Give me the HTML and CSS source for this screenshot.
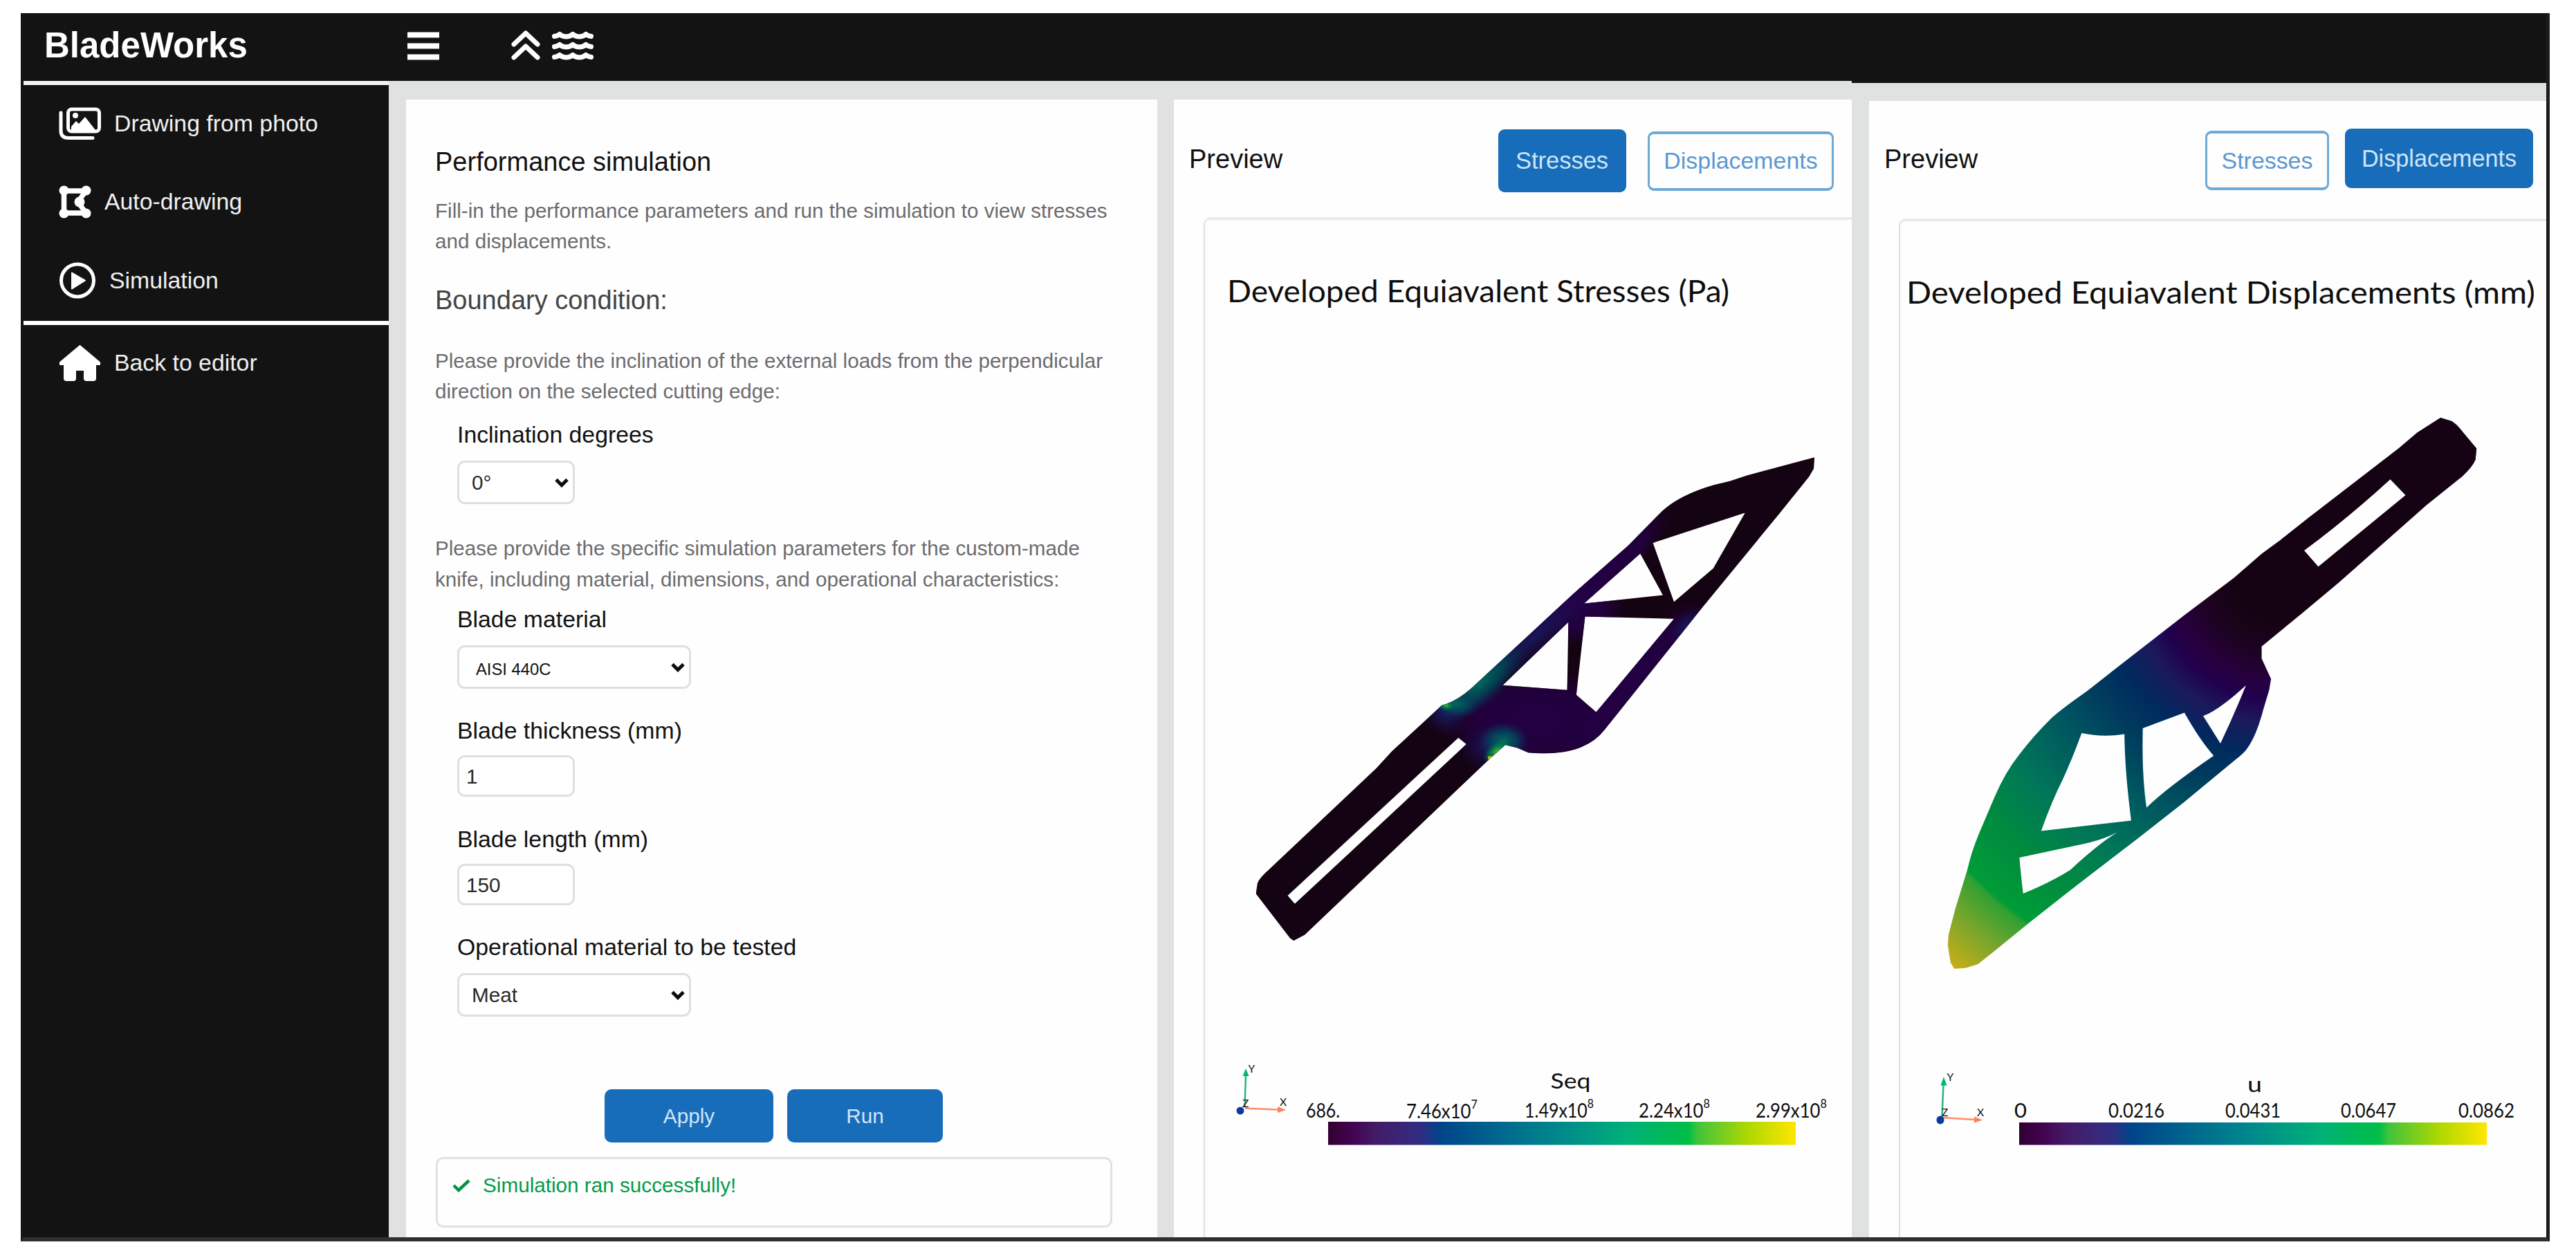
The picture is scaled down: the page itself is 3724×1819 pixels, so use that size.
FILE: index.html
```html
<!DOCTYPE html>
<html lang="en-US">
<head>
  <meta charset="UTF-8" />
  <meta name="viewport" content="width=device-width, initial-scale=1" />
  <title>BladeWorks - Simulation</title>
  <link rel="stylesheet" href="styles.css">
</head>
<body>
  <div class="app">
    <header class="topbar">
      <div class="brand">BladeWorks</div>
      <svg class="icon-menu" width="48" height="41" viewBox="0 0 48 41">
        <path d="M1 4.500H47M1 20.500H47M1 36.500H47" stroke="#fff" stroke-width="8" />
      </svg>
      <svg class="icon-up" width="42" height="44" viewBox="0 0 42 44" fill="none" stroke="#fff" stroke-width="7" stroke-linecap="round" stroke-linejoin="round">
        <path d="M4 21L21 5L38 21M4 40L21 24L38 40" />
      </svg>
      <svg class="icon-waves" width="60" height="42" viewBox="0 0 60 42" fill="none" stroke="#fff" stroke-width="7" stroke-linecap="round" stroke-linejoin="round">
        <path id="wave" d="M3.500 7.500Q8 7 11 4.500Q15 8 20.500 8Q26 8 30 4.500Q34 8 39.500 8Q45 8 49 4.500Q52 7 56.500 7.500" />
        <use href="#wave" y="15" />
        <use href="#wave" y="30" />
      </svg>
    </header>

    <div class="body">
      <nav class="sidebar">
        <a class="nav-item">
          <svg width="61" height="48" viewBox="0 0 61 48" fill="none" stroke="#fff">
            <rect x="13.500" y="3" width="45" height="32" rx="5" stroke-width="5" />
            <path d="M3 8V34Q3 44.500 14 44.500H49" stroke-width="5" stroke-linecap="round" />
            <circle cx="24" cy="12" r="4" fill="#fff" stroke="none" />
            <path d="M18 33V28L25 20L29 24L38 14L53 33Z" fill="#fff" stroke="none" />
          </svg>
          <span>Drawing from photo</span>
        </a>
        <a class="nav-item">
          <svg width="47" height="48" viewBox="0 0 47 48" fill="#fff" stroke="#fff">
            <path d="M7.500 8H39L28 24L39 40H7.500Z" fill="none" stroke-width="7.500" />
            <circle cx="7.500" cy="7.500" r="7" stroke="none" />
            <circle cx="39.500" cy="7.500" r="7" stroke="none" />
            <circle cx="30" cy="24" r="7.500" stroke="none" />
            <circle cx="39.500" cy="40.500" r="7" stroke="none" />
            <circle cx="7.500" cy="40.500" r="7" stroke="none" />
          </svg>
          <span>Auto-drawing</span>
        </a>
        <a class="nav-item">
          <svg width="54" height="53" viewBox="0 0 54 53">
            <circle cx="27" cy="26.500" r="23.500" fill="none" stroke="#fff" stroke-width="5" />
            <path d="M19 15.500L38 26.500L19 38.500Z" fill="#fff" stroke="#fff" stroke-width="2" stroke-linejoin="round" />
          </svg>
          <span>Simulation</span>
        </a>
        <div class="divider"></div>
        <a class="nav-item">
          <svg width="61" height="54" viewBox="0 0 61 54">
            <path d="M30.500 2L59 26V29H53V49Q53 52 50 52H40Q37 52 37 49V37H24V49Q24 52 21 52H11Q8 52 8 49V29H2V26Z" fill="#fff" stroke="#fff" stroke-width="2" stroke-linejoin="round" />
          </svg>
          <span>Back to editor</span>
        </a>
      </nav>

      <main class="workspace">
        <section class="panel form-panel">
          <h2>Performance simulation</h2>
          <p class="intro">Fill-in the performance parameters and run the simulation to view stresses<br>and displacements.</p>
          <h3>Boundary condition:</h3>
          <p class="note">Please provide the inclination of the external loads from the perpendicular<br>direction on the selected cutting edge:</p>

          <div class="field field-degrees">
            <label for="degrees">Inclination degrees</label>
            <div class="select short">
              <select id="degrees"><option>0°</option></select>
              <svg class="arrow" width="20" height="14" viewBox="0 0 20 14"><path d="M2 2.500L10 10.500L18 2.500" /></svg>
            </div>
          </div>

          <p class="note note-params">Please provide the specific simulation parameters for the custom-made<br>knife, including material, dimensions, and operational characteristics:</p>

          <div class="field field-material">
            <label for="material">Blade material</label>
            <div class="select">
              <select id="material" class="small-text"><option>AISI 440C</option></select>
              <svg class="arrow" width="20" height="14" viewBox="0 0 20 14"><path d="M2 2.500L10 10.500L18 2.500" /></svg>
            </div>
          </div>
          <div class="field field-input">
            <label for="thickness">Blade thickness (mm)</label>
            <input type="text" id="thickness" value="1">
          </div>
          <div class="field field-input">
            <label for="length">Blade length (mm)</label>
            <input type="text" id="length" value="150">
          </div>
          <div class="field field-tested">
            <label for="tested">Operational material to be tested</label>
            <div class="select">
              <select id="tested"><option>Meat</option></select>
              <svg class="arrow" width="20" height="14" viewBox="0 0 20 14"><path d="M2 2.500L10 10.500L18 2.500" /></svg>
            </div>
          </div>

          <div class="button-row">
            <button type="button" class="apply-btn">Apply</button>
            <button type="button" class="run-btn">Run</button>
          </div>
          <div class="status">
            <svg width="28" height="20" viewBox="0 0 28 20"><path d="M3 10L10 17L25 3" fill="none" stroke="#009245" stroke-width="4.500" /></svg>
            <span>Simulation ran successfully!</span>
          </div>
        </section>

        <section class="panel preview">
          <div class="preview-head">
            <h2>Preview</h2>
            <button type="button" class="tab active tab-stresses">Stresses</button>
            <button type="button" class="tab tab-displacements">Displacements</button>
          </div>
          <div class="plot">
            <svg width="935" height="1471" viewBox="1742 318 935 1471">
              <defs>
                <linearGradient id="viridis">
                  <stop offset="0" stop-color="#300030" />
                  <stop offset=".05" stop-color="#43034f" />
                  <stop offset=".1" stop-color="#431a66" />
                  <stop offset=".16" stop-color="#3a2678" />
                  <stop offset=".2" stop-color="#2f2d82" />
                  <stop offset=".24" stop-color="#00448a" />
                  <stop offset=".39" stop-color="#006d8e" />
                  <stop offset=".5" stop-color="#008a8c" />
                  <stop offset=".64" stop-color="#00b078" />
                  <stop offset=".77" stop-color="#00be48" />
                  <stop offset=".79" stop-color="#40c33c" />
                  <stop offset=".9" stop-color="#b0d800" />
                  <stop offset="1" stop-color="#ffe600" />
                </linearGradient>
                <radialGradient id="purple">
                  <stop offset="0" stop-color="#230045" />
                  <stop offset=".6" stop-color="#230043" stop-opacity=".85" />
                  <stop offset="1" stop-color="#230043" stop-opacity="0" />
                </radialGradient>
                <radialGradient id="navy">
                  <stop offset="0" stop-color="#18185c" />
                  <stop offset="1" stop-color="#1c0c50" stop-opacity="0" />
                </radialGradient>
                <radialGradient id="teal">
                  <stop offset="0" stop-color="#006a5c" />
                  <stop offset=".5" stop-color="#004a5c" stop-opacity=".8" />
                  <stop offset="1" stop-color="#102a5c" stop-opacity="0" />
                </radialGradient>
                <radialGradient id="hot">
                  <stop offset="0" stop-color="#5fb030" />
                  <stop offset=".4" stop-color="#009040" stop-opacity=".8" />
                  <stop offset="1" stop-color="#006a5c" stop-opacity="0" />
                </radialGradient>
                <clipPath id="knife-stress">
                  <path clip-rule="evenodd" d="M1469 45L1467 80L1455 105L1380 218L1180 515L940 880Q905 935 835 948Q790 955 748 950L720 935L690 926L650 970L185 1508L157 1526L148 1518L62 1382L66 1350Q70 1335 95 1308L365 998L405 945L530 805Q565 795 605 752L860 465L1000 315L1085 210Q1130 160 1215 130L1255 118L1300 100ZM1294 215L1062 307L1115 488L1214 385ZM1030 340L888 493L1087 467ZM849 550L684 743L846 758ZM891 533L869 773L919 826L1115 540ZM572 904L142 1388L160 1413L592 924Z" />
                </clipPath>
              </defs>
              <text class="plot-title" x="1774" y="436.500" textLength="726" lengthAdjust="spacingAndGlyphs">Developed Equiavalent Stresses (Pa)</text>

              <g transform="translate(1780 640) scale(.57398 .47194)">
                <g clip-path="url(#knife-stress)">
                  <rect width="1568" height="1568" fill="#140312" />
                  <ellipse cx="770" cy="850" rx="250" ry="150" fill="url(#purple)" />
                  <ellipse cx="860" cy="500" rx="130" ry="120" fill="url(#purple)" />
                  <ellipse cx="1010" cy="730" rx="60" ry="300" fill="url(#purple)" transform="rotate(33 1010 730)" />
                  <ellipse cx="930" cy="400" rx="60" ry="260" fill="url(#purple)" transform="rotate(42 930 400)" />
                  <ellipse cx="1145" cy="560" rx="35" ry="70" fill="url(#navy)" transform="rotate(33 1145 560)" />
                  <ellipse cx="760" cy="600" rx="60" ry="210" fill="url(#navy)" transform="rotate(42 760 600)" />
                  <ellipse cx="625" cy="735" rx="65" ry="170" fill="url(#teal)" transform="rotate(42 625 735)" />
                  <ellipse cx="540" cy="830" rx="60" ry="70" fill="url(#navy)" />
                  <ellipse cx="565" cy="800" rx="60" ry="45" fill="url(#teal)" />
                  <ellipse cx="542" cy="806" rx="22" ry="16" fill="url(#hot)" />
                  <ellipse cx="660" cy="935" rx="90" ry="80" fill="url(#navy)" />
                  <ellipse cx="685" cy="915" rx="65" ry="60" fill="url(#teal)" />
                  <ellipse cx="668" cy="945" rx="24" ry="45" fill="url(#hot)" transform="rotate(42 668 945)" />
                  <circle cx="652" cy="966" r="6" fill="#a8c020" />
                </g>
              </g>

              <path d="M1799.500 1600L1801 1555" stroke="#26b67c" stroke-width="2.500" />
              <path d="M1801 1545L1805.500 1556H1796.500Z" fill="#00b870" />
              <path d="M1800 1602.500L1848 1604.500" stroke="#ff8a66" stroke-width="2.500" />
              <path d="M1859 1605L1847 1600V1609Z" fill="#ff7f5a" />
              <ellipse cx="1793" cy="1606" rx="5.500" ry="5.500" fill="#0a3aa0" />
              <text class="axis" x="1804.500" y="1551">Y</text>
              <text class="axis" x="1850" y="1599">X</text>
              <text class="axis" x="1796" y="1601">Z</text>

              <text class="scale-name" x="2241.500" y="1574" textLength="58" lengthAdjust="spacingAndGlyphs">Seq</text>
              <text class="scale" x="1888" y="1615.500" textLength="49" lengthAdjust="spacingAndGlyphs">686.</text>
              <text class="scale" x="2033" y="1616.500" textLength="103" lengthAdjust="spacingAndGlyphs">7.46x10<tspan class="sup" dy="-14">7</tspan></text>
              <text class="scale" x="2204" y="1615.500" textLength="100" lengthAdjust="spacingAndGlyphs">1.49x10<tspan class="sup" dy="-13.500">8</tspan></text>
              <text class="scale" x="2369" y="1615.500" textLength="103" lengthAdjust="spacingAndGlyphs">2.24x10<tspan class="sup" dy="-13.500">8</tspan></text>
              <text class="scale" x="2538" y="1615.500" textLength="103" lengthAdjust="spacingAndGlyphs">2.99x10<tspan class="sup" dy="-13.500">8</tspan></text>
              <rect x="1920" y="1622" width="676" height="33.500" fill="url(#viridis)" />
            </svg>
          </div>
        </section>

        <div class="compare">
          <section class="panel preview">
            <div class="preview-head">
              <h2>Preview</h2>
              <button type="button" class="tab tab-stresses">Stresses</button>
              <button type="button" class="tab active tab-displacements">Displacements</button>
            </div>
            <div class="plot">
              <svg width="933" height="1469" viewBox="2748 320 933 1469">
                <defs>
                  <radialGradient id="displacement" gradientUnits="userSpaceOnUse" cx="950" cy="480" r="1360">
                    <stop offset="0" stop-color="#150313" />
                    <stop offset=".09" stop-color="#150313" />
                    <stop offset=".15" stop-color="#1c0322" />
                    <stop offset=".2" stop-color="#27003d" />
                    <stop offset=".24" stop-color="#21004d" />
                    <stop offset=".285" stop-color="#1c185c" />
                    <stop offset=".35" stop-color="#002a5e" />
                    <stop offset=".42" stop-color="#003c5e" />
                    <stop offset=".5" stop-color="#005460" />
                    <stop offset=".63" stop-color="#007758" />
                    <stop offset=".73" stop-color="#008a40" />
                    <stop offset=".838" stop-color="#009c36" />
                    <stop offset=".848" stop-color="#30a033" />
                    <stop offset=".92" stop-color="#7ca62c" />
                    <stop offset="1" stop-color="#c8ae16" />
                  </radialGradient>
                  <!-- the handle is clamped, so it stays at zero -->
                  <linearGradient id="clamped" gradientUnits="userSpaceOnUse" x1="930" y1="500" x2="1010" y2="420">
                    <stop offset="0" stop-color="#150313" stop-opacity="0" />
                    <stop offset="1" stop-color="#150313" />
                  </linearGradient>
                  <path id="knife-displacement" fill-rule="evenodd" d="M1382 45L1412 54Q1424 62 1432 72L1478 128L1475 158Q1468 176 1440 203L1345 280L1250 365L1110 490L1010 575L905 662V695L930 750L925 780L910 830Q892 900 868 935Q860 948 835 968L695 1085L575 1180L395 1320L285 1408L195 1482L148 1520L115 1530L85 1532L75 1515L68 1468L70 1440L88 1370L120 1265Q130 1220 150 1170L192 1070Q222 1000 258 955Q295 905 345 855Q375 828 440 782L550 695L700 577L830 478L905 412L955 375L1030 315L1270 128L1320 85ZM1248 211Q1130 320 1018 403L1056 447L1289 254ZM863 767Q790 835 749 850L795 924Q830 850 863 767ZM699 841L588 883Q585 1010 598 1097Q650 1045 777 957Q740 915 699 841ZM425 896Q400 965 375 1020Q345 1080 317 1160L557 1132Q540 1000 539 899Q480 908 425 896ZM259 1232Q265 1300 269 1329Q340 1300 395 1265Q470 1195 521 1163Q480 1185 430 1195Z" />
                </defs>
                <text class="plot-title" x="2757" y="438.500" textLength="909" lengthAdjust="spacingAndGlyphs">Developed Equiavalent Displacements (mm)</text>

                <g transform="translate(2780 580) scale(.54209 .53571)">
                  <use href="#knife-displacement" fill="url(#displacement)" />
                  <use href="#knife-displacement" fill="url(#clamped)" />
                </g>

                <path d="M2808.500 1614L2810.500 1568" stroke="#26b67c" stroke-width="2.500" />
                <path d="M2811 1557L2815.500 1569.500H2806.500Z" fill="#00b870" />
                <path d="M2809 1616L2857 1619" stroke="#ff8a66" stroke-width="2.500" />
                <path d="M2867 1619.500L2855 1614.500V1623.500Z" fill="#ff7f5a" />
                <ellipse cx="2806" cy="1619.500" rx="5.500" ry="6" fill="#0a3aa0" />
                <text class="axis" x="2815.500" y="1562.500">Y</text>
                <text class="axis" x="2859" y="1613.500">X</text>
                <text class="axis" x="2808" y="1613.500">Z</text>

                <text class="scale-name" x="3250" y="1579" textLength="21" lengthAdjust="spacingAndGlyphs">u</text>
                <text class="scale" x="2913" y="1615.500" textLength="18" lengthAdjust="spacingAndGlyphs">0</text>
                <text class="scale" x="3049" y="1615.500" textLength="81" lengthAdjust="spacingAndGlyphs">0.0216</text>
                <text class="scale" x="3218" y="1615.500" textLength="80" lengthAdjust="spacingAndGlyphs">0.0431</text>
                <text class="scale" x="3385" y="1615.500" textLength="80" lengthAdjust="spacingAndGlyphs">0.0647</text>
                <text class="scale" x="3555" y="1615.500" textLength="81" lengthAdjust="spacingAndGlyphs">0.0862</text>
                <rect x="2920" y="1623" width="676" height="32.500" fill="url(#viridis)" />
              </svg>
            </div>
          </section>
        </div>
      </main>
    </div>
  </div>
</body>
</html>
```
FILE: styles.css
```css
*, *::before, *::after { box-sizing: border-box; }
body {
  font-family: "Liberation Sans", Arial, sans-serif;
  background: #fff;
  color: #111;
  margin: 0;
  padding: 19px 0 0 30px;
}
h2, h3, p { margin: 0; font-weight: 400; }
svg { display: block; flex: none; }

.app {
  width: 3656px;
  height: 1776px;
  border-left: 4px solid #141414;
  border-right: 5px solid #1c1c1e;
  border-bottom: 6px solid #303032;
  overflow: hidden;
}

/* top bar */
.topbar {
  height: 98px;
  background: #131313;
  display: flex;
  align-items: flex-start;
  padding: 25px 0 0 30px;
}
.brand {
  width: 524px;
  color: #fff;
  font-size: 51px;
  font-weight: 700;
  line-height: 44px;
}
.icon-menu { margin-top: 2px; }
.icon-up { margin: -1px 17px 0 103px; }
.icon-waves { margin-top: 1px; }

.body {
  display: flex;
  height: 1672px;
}

/* sidebar */
.sidebar {
  width: 528px;
  flex: none;
  background: #131313;
  border-top: 6px solid #f4f2f4;
}
.nav-item {
  display: flex;
  align-items: center;
  gap: 20px;
  height: 113.5px;
  padding: 0 0 2px 51px;
  color: #f0f0f0;
  font-size: 33.8px;
}
.nav-item span { margin: -1px 0 0 -1px; }
.divider {
  height: 6px;
  background: #fff;
}

/* workspace */
.workspace {
  flex: 1;
  min-width: 0;
  display: flex;
  background: #e0e2e1;
  padding-left: 25px;
}
.panel {
  background: #fefefe;
  margin-top: 27px;
  overflow: hidden;
}
.form-panel {
  width: 1086px;
  flex: none;
  margin-right: 24px;
  padding: 68px 0 0 42px;
}
.form-panel h2 {
  font-size: 38px;
  line-height: 44px;
}
.form-panel h3 {
  margin: 41px 0 43.6px;
  font-size: 38px;
  line-height: 44px;
  color: #444;
}
.intro, .note {
  font-size: 29.63px;
  line-height: 44.4px;
  color: #6b6b6e;
  white-space: nowrap;
}
.intro { margin-top: 26.5px; }
.note-params { margin-top: 42.5px; }

.field { padding-left: 32px; }
.field label {
  display: block;
  font-size: 33.8px;
  line-height: 40px;
}
.field-degrees { padding-top: 19px; }
.field-material { padding-top: 14.7px; }
.field-input, .field-tested { padding-top: 40.4px; }

.select {
  position: relative;
  width: 338px;
  height: 63px;
  margin: 18px 0 0;
}
.select.short { width: 170px; }
.select select,
.field input {
  appearance: none;
  width: 100%;
  height: 100%;
  border: 3px solid #dfdfe0;
  border-radius: 11px;
  background: #fff;
  font-family: inherit;
  font-size: 29.7px;
  color: #2a2a2a;
  padding: 0 0 0 18px;
}
.select select.small-text {
  font-size: 23.8px;
  color: #111;
  padding: 6px 0 0 24px;
}
.select .arrow {
  position: absolute;
  right: 9px;
  top: 25px;
}
.arrow path {
  fill: none;
  stroke: #0c0c0c;
  stroke-width: 5;
}
.field input {
  display: block;
  width: 170px;
  height: 60px;
  margin: 16px 0 0;
  padding: 2px 0 0 10px;
}

.button-row {
  display: flex;
  gap: 20px;
  margin: 105.6px 0 20.5px 245px;
}
.button-row button {
  height: 77px;
  border: none;
  border-radius: 10px;
  background: #176dba;
  color: #d3e6f7;
  font-family: inherit;
  font-size: 29.7px;
  padding: 0;
}
.apply-btn { width: 244px; }
.run-btn { width: 225px; }

.status {
  display: flex;
  align-items: flex-start;
  gap: 16px;
  width: 978px;
  height: 102px;
  margin-left: 1px;
  padding: 20px 0 0 20px;
  border: 3px solid #e0e1e1;
  border-radius: 11px;
  color: #009c48;
  font-size: 29.7px;
  line-height: 36px;
}
.status svg { margin-top: 8px; }
.status span { margin-left: 1px; }

/* previews */
.preview { width: 980px; }
.preview-head {
  display: flex;
  align-items: center;
  padding: 43px 0 36px 22px;
}
.preview-head h2 {
  width: 446.5px;
  margin-top: -5px;
  font-size: 38px;
}
.tab {
  height: 86px;
  padding: 0;
  border: 4px solid #6fa9d6;
  border-left-width: 3px;
  border-right-width: 3px;
  border-radius: 9px;
  background: #fefefe;
  color: #5b98d0;
  font-family: inherit;
  font-size: 33.9px;
}
.tab-stresses { width: 185px; }
.tab-displacements { width: 269px; margin-left: 31.5px; }
.tab.active {
  height: 91px;
  border: none;
  background: #176dba;
  color: #cfe4f6;
  font-size: 34.5px;
}
.plot {
  width: 1000px;
  height: 1500px;
  margin-left: 43px;
  border: 2px solid #dddfdf;
  border-top: 4px solid #e9ebea;
  border-radius: 10px 0 0 0;
}

.compare {
  flex: 1;
  min-width: 0;
  border-top: 3px solid #131313;
  padding-left: 25px;
}
.compare .panel { margin-top: 26px; }
.compare .preview-head {
  height: 170px;
  padding: 40px 0 41px 22px;
}
.compare .preview-head h2 {
  width: 464px;
  margin-top: 0;
}
.compare .tab-stresses {
  width: 179px;
  align-self: flex-end;
}
.compare .tab-displacements {
  width: 272px;
  height: 86px;
  margin-left: 23px;
  align-self: flex-start;
  font-size: 34.2px;
}

/* text inside the plots */
.plot-title, .scale, .scale-name, .axis {
  font-family: Lato, "Open Sans", sans-serif;
  fill: #0e0e0e;
}
.plot-title { font-size: 43.5px; }
.scale { font-size: 28.5px; }
.scale-name { font-size: 30px; }
.sup { font-size: 18px; }
.axis { font-size: 15.5px; }
```
